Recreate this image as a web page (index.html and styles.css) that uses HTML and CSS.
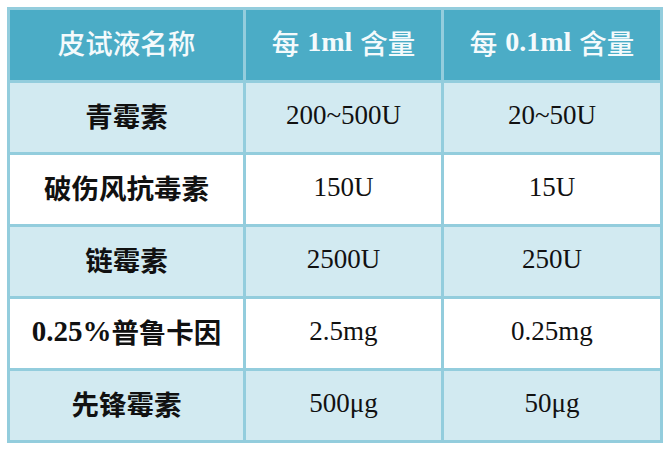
FILE: index.html
```html
<!DOCTYPE html>
<html lang="zh-CN">
<head>
<meta charset="utf-8">
<link rel="stylesheet" href="styles.css">
</head>
<body>
<div class="table">
  <div class="cell head">皮试液名称</div>
  <div class="cell head">每<b class="lat">1ml</b>含量</div>
  <div class="cell head">每<b class="lat">0.1ml</b>含量</div>

  <div class="cell tint name">青霉素</div>
  <div class="cell tint val">200~500U</div>
  <div class="cell tint val">20~50U</div>

  <div class="cell name">破伤风抗毒素</div>
  <div class="cell val">150U</div>
  <div class="cell val">15U</div>

  <div class="cell tint name">链霉素</div>
  <div class="cell tint val">2500U</div>
  <div class="cell tint val">250U</div>

  <div class="cell name"><span class="latb">0.25%</span>普鲁卡因</div>
  <div class="cell val">2.5mg</div>
  <div class="cell val">0.25mg</div>

  <div class="cell tint name">先锋霉素</div>
  <div class="cell tint val">500μg</div>
  <div class="cell tint val">50μg</div>
</div>
</body>
</html>
```

FILE: styles.css
```css
html, body {
  margin: 0;
  padding: 0;
  background: #ffffff;
}
.table {
  margin: 7px 0 0 7px;
  width: 650px;
  padding: 3px;
  background: #93cddd;
  display: grid;
  grid-template-columns: 233px 195px 216px;
  grid-template-rows: 70px repeat(5, 69px);
  gap: 3px;
}
.cell {
  display: flex;
  align-items: center;
  justify-content: center;
  padding-bottom: 5px;
  background: #ffffff;
  color: #111111;
  font-size: 27px;
  white-space: nowrap;
}
.tint {
  background: #d2eaf1;
}
.head {
  background: #4bacc6;
  color: #f4fafc;
  font-family: "Noto Sans CJK SC", sans-serif;
  font-weight: 500;
  font-size: 27.5px;
  padding-bottom: 6px;
}
.lat {
  font-family: "Liberation Serif", serif;
  font-weight: 700;
  font-size: 28px;
  margin: 0 8px 0 8px;
}
.name {
  font-family: "Noto Sans CJK SC", sans-serif;
  font-weight: 700;
  font-size: 27.5px;
}
.latb {
  font-family: "Liberation Serif", serif;
  font-weight: 700;
  font-size: 29px;
}
.val {
  font-family: "Liberation Serif", serif;
  font-size: 27px;
}
```
